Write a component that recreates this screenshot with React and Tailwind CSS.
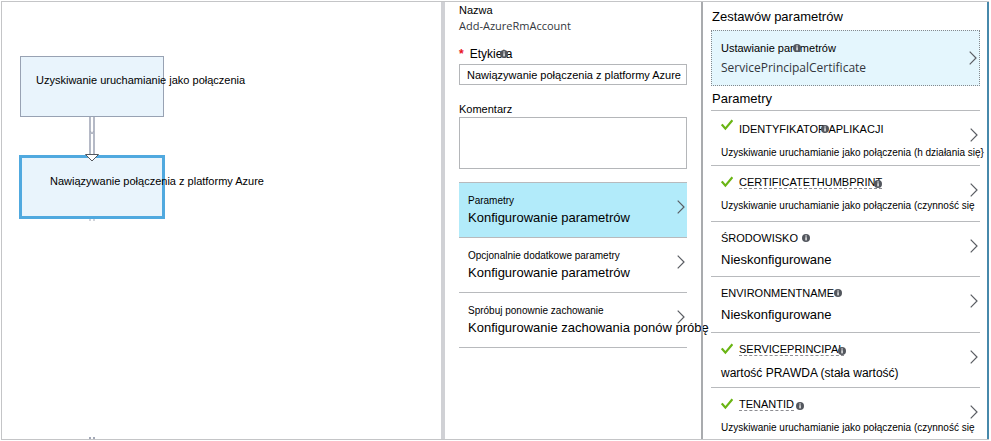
const ui = "font-['Liberation_Sans',Arial,sans-serif]";
const segoe = "font-['Open_Sans','Noto_Sans',sans-serif]";

function Chevron() {
  return (
    <svg className="h-4 w-2 shrink-0" viewBox="0 0 8 16" fill="none" stroke="#5a5d63" strokeWidth="1.2" aria-hidden="true">
      <path d="M0.7 1.7 7 8 0.7 14.3" />
    </svg>
  );
}

function Check({ className = "" }) {
  return (
    <svg className={`mr-1.5 h-3 w-3 shrink-0 ${className}`} viewBox="0 0 12 12" fill="none" stroke="#6ab514" strokeWidth="2.2" aria-hidden="true">
      <path d="M0.8 5.4 4.4 9.6 11.4 1.2" />
    </svg>
  );
}

function Info({ className = "" }) {
  return (
    <svg className={`h-2 w-2 shrink-0 ${className}`} viewBox="0 0 8 8" aria-hidden="true">
      <circle cx="4" cy="4" r="4" fill="#53575e" />
      <rect x="3.4" y="1.4" width="1.3" height="1.2" fill="#fff" />
      <rect x="3.4" y="3.2" width="1.3" height="3.2" fill="#fff" />
    </svg>
  );
}

const settings = [
  { title: "Parametry", value: "Konfigurowanie parametrów", selected: true },
  { title: "Opcjonalnie dodatkowe parametry", value: "Konfigurowanie parametrów" },
  { title: "Spróbuj ponownie zachowanie", value: "Konfigurowanie zachowania ponów próbę" },
];

const small = "leading-7 text-[10px]";
const medium = "leading-7 text-xs";
const large = "leading-6 text-[13px]";
const dashed = "border-b border-dashed border-[#8d8d92]";

const parameters = [
  { title: "IDENTYFIKATOR APLIKACJI", value: "Uzyskiwanie uruchamianie jako połączenia (h działania się}", check: "self-start", size: small, info: "-ml-[62px]", pad: "pt-2" },
  { title: "CERTIFICATETHUMBPRINT", value: "Uzyskiwanie uruchamianie jako połączenia (czynność się", check: "self-center", size: small, info: "mt-1 -ml-2", pad: "pt-1.5", line: dashed },
  { title: "ŚRODOWISKO", value: "Nieskonfigurowane", size: large, info: "ml-1", pad: "pt-1.5" },
  { title: "ENVIRONMENTNAME", value: "Nieskonfigurowane", size: large, info: "", pad: "pt-1.5" },
  { title: "SERVICEPRINCIPAL", value: "wartość PRAWDA (stała wartość)", check: "self-center", size: medium, info: "mt-1 -ml-1.5", pad: "pt-1.5", line: dashed },
  { title: "TENANTID", value: "Uzyskiwanie uruchamianie jako połączenia (czynność się", check: "self-center", size: small, info: "mt-1 ml-0.5", pad: "pt-1.5", line: dashed },
];

function Canvas() {
  return (
    <section className="relative min-w-0 flex-1 overflow-hidden" aria-label="Graf">
      <div className="absolute left-[18px] top-[54px] flex h-[61px] w-[144px] items-center whitespace-nowrap border border-[#98a2b3] bg-[#e9f4fc] pb-3 pl-[15px] text-[11px]">
        Uzyskiwanie uruchamianie jako połączenia
      </div>
      <div className="absolute left-[17px] top-[153px] flex h-16 w-[146px] items-center whitespace-nowrap border-3 border-[#50a9df] bg-[#e9f4fc] pb-3 pl-7 text-[11px]">
        Nawiązywanie połączenia z platformy Azure
      </div>
      <svg className="absolute left-[81px] top-[115px] h-11 w-4" viewBox="0 0 16 44" fill="none" aria-hidden="true">
        <path d="M7 0V38M11 0V38" stroke="#a3a9b8" strokeWidth="1.6" />
        <path d="M7.4 14 9 17 10.6 14" stroke="#a3a9b8" />
        <path d="M2.5 37.5H15.5L9 44Z" fill="#fff" stroke="#55585e" />
      </svg>
      <svg className="absolute left-[87px] top-[217px] h-0.5 w-1.5" viewBox="0 0 6 2" aria-hidden="true">
        <path d="M0 1H2M4 1H6" stroke="#a3a9b8" />
      </svg>
      <svg className="absolute bottom-0 left-[87px] h-0.5 w-1.5" viewBox="0 0 6 2" aria-hidden="true">
        <path d="M0 1H2M4 1H6" stroke="#a3a9b8" strokeWidth="2" />
      </svg>
    </section>
  );
}

function Settings() {
  return (
    <section className="w-64 shrink-0 px-3.5">
      <div className="text-[11px] leading-4">Nazwa</div>
      <div className={`text-[11px] leading-4 text-[#33373d] ${segoe}`}>Add-AzureRmAccount</div>
      <label htmlFor="label" className="mt-3 flex h-4 items-center text-xs">
        <span className="mr-1.5 font-bold text-[#e81123]">*</span>
        Etykieta
        <Info className="-ml-3" />
      </label>
      <input id="label" defaultValue="Nawiązywanie połączenia z platformy Azure" className="mt-0.5 block h-[21px] w-full border border-[#b4b6b9] pl-[7px] pt-px text-[11px] outline-none" />
      <label htmlFor="comment" className="mt-4 block text-[11px] leading-4">Komentarz</label>
      <textarea id="comment" className="block h-[52px] w-full resize-none border border-[#b4b6b9] outline-none" />
      <div className="mt-[13px] border-b border-[#b8babd]">
        {settings.map((s) => (
          <button key={s.title} type="button" className={`flex h-[55px] w-full items-start whitespace-nowrap border-t border-[#b8babd] pl-[9px] pr-0.5 text-left ${s.selected ? "bg-[#b2ebfa]" : ""}`}>
            <span className="block w-0 grow pt-2.5">
              <span className="block text-[10px] leading-4">{s.title}</span>
              <span className="block text-[13px] leading-[18px]">{s.value}</span>
            </span>
            <span className="pt-4"><Chevron /></span>
          </button>
        ))}
      </div>
    </section>
  );
}

function Parameters() {
  return (
    <section className="w-[286px] shrink-0 border-r-2 border-[#4789ab] pl-2 pr-[7px] pt-1.5">
      <h2 className="pl-px text-[13px] leading-[18px]">Zestawów parametrów</h2>
      <button type="button" className="mt-1 flex h-14 w-full items-center whitespace-nowrap border border-dotted border-[#85898d] bg-[#e4f6fd] pl-[9px] pr-0.5 text-left">
        <span className="block w-0 grow">
          <span className="flex h-5 items-center text-[11px]">
            Ustawianie parametrów
            <Info className="-ml-[43px]" />
          </span>
          <span className={`block text-xs leading-5 text-[#33373d] ${segoe}`}>ServicePrincipalCertificate</span>
        </span>
        <Chevron />
      </button>
      <h2 className="mt-1 pl-px text-[13px] leading-[18px]">Parametry</h2>
      <div className="mt-0.5">
        {parameters.map((p) => (
          <button key={p.title} type="button" className="flex h-[55px] w-full items-start whitespace-nowrap border-t border-[#b8babd] pl-2.5 pr-0.5 text-left even:h-14">
            <span className={`block w-0 grow ${p.pad}`}>
              <span className="flex h-5 items-center text-[11px] leading-3">
                {p.check && <Check className={p.check} />}
                <span className={p.line}>{p.title}</span>
                <Info className={p.info} />
              </span>
              <span className={`block ${p.size}`}>{p.value}</span>
            </span>
            <span className="pt-4"><Chevron /></span>
          </button>
        ))}
      </div>
    </section>
  );
}

export default function App() {
  return (
    <main className={`h-screen bg-white pb-px pl-px pr-0.5 pt-px text-black ${ui}`}>
      <div className="flex h-full overflow-hidden border-y border-l border-[#c4c5c7]">
        <Canvas />
        <div className="w-1 shrink-0 bg-[#d0d1d5]" />
        <Settings />
        <div className="w-0.5 shrink-0 bg-[#a9abae]" />
        <Parameters />
      </div>
    </main>
  );
}
